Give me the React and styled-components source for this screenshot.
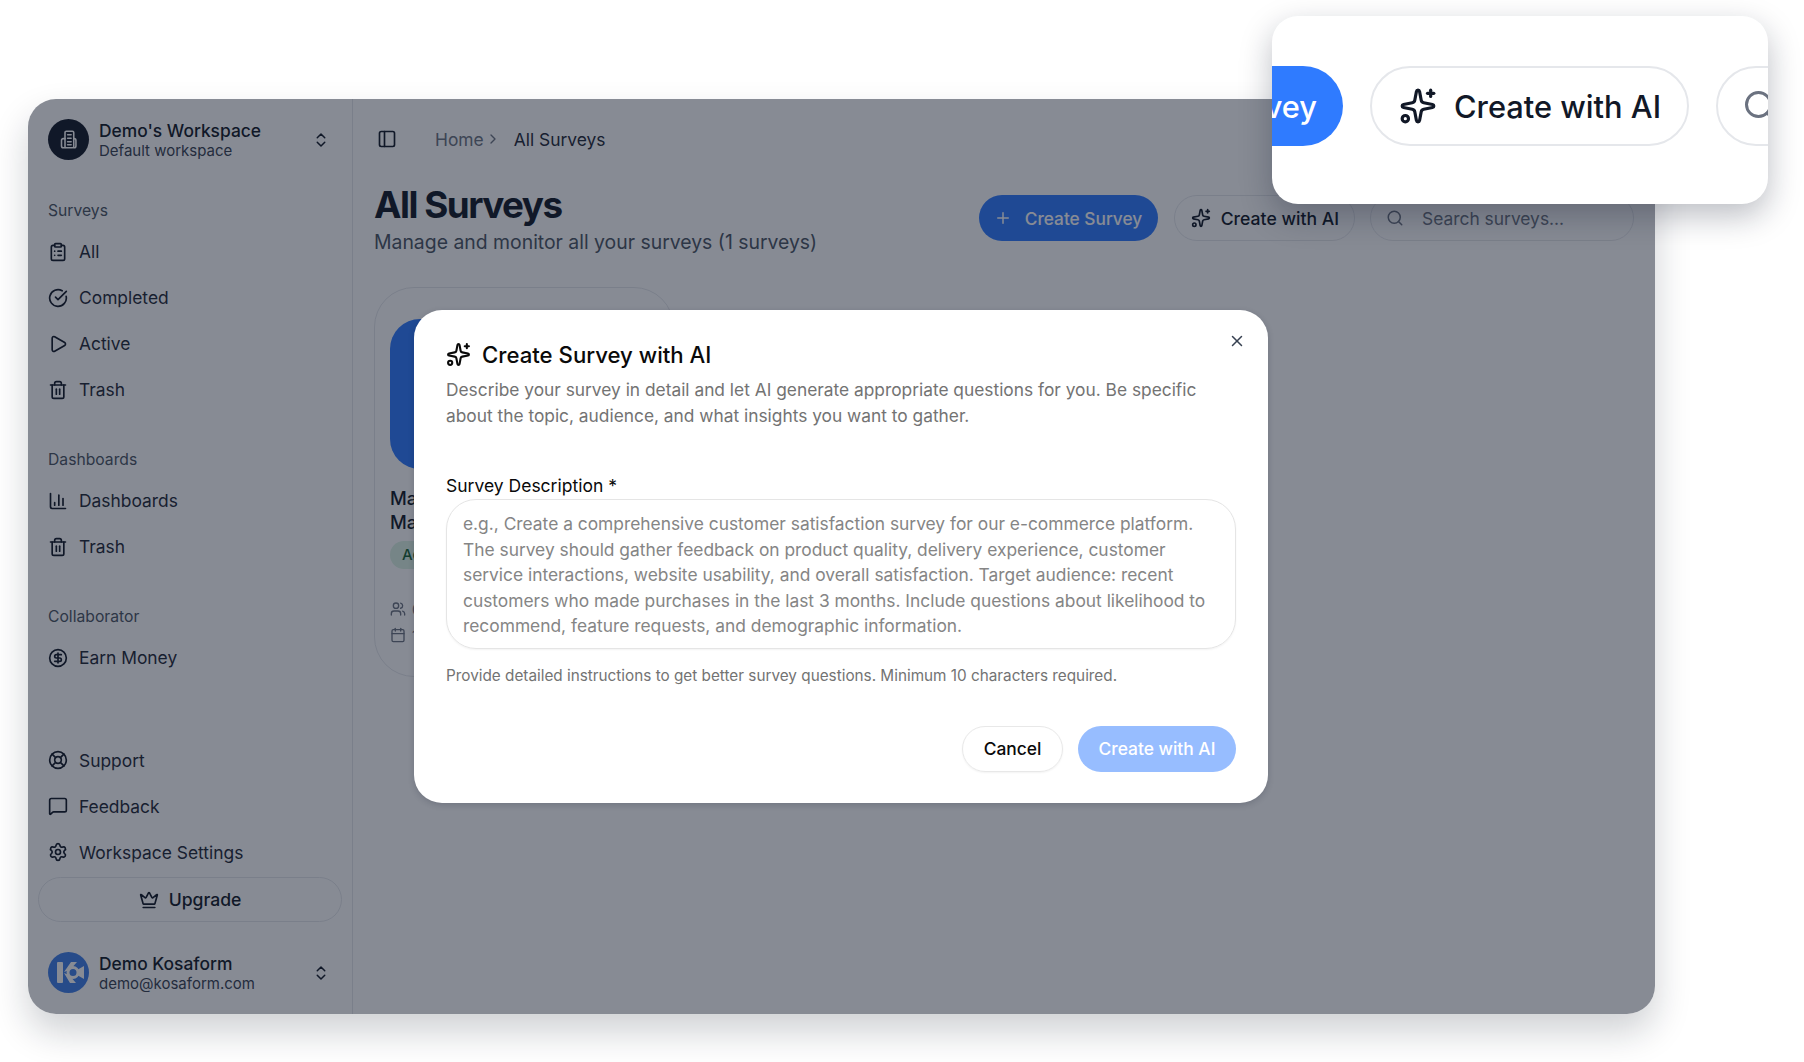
import React from 'react'
import styled, { createGlobalStyle } from 'styled-components'
import {
  Calendar, ChartColumn, ChevronRight, ChevronsUpDown, CircleCheckBig, CircleDollarSign,
  ClipboardList, Crown, LifeBuoy, MessageSquare, PanelLeft, Play, Plus, Search, Settings, Sparkles,
  Trash2, Users, X,
} from 'lucide-react'

const GlobalStyle = createGlobalStyle`
  html, body { margin: 0; padding: 0; background: #fff; }
  body { font-family: Inter, "Noto Sans", sans-serif; color: #111827; overflow: hidden; }
  * { box-sizing: border-box; }
`

const Page = styled.div`
  position: relative;
  width: 1804px;
  height: 1062px;
  padding: 99px 0 0 28px;
`
const AppWindow = styled.div`
  position: relative;
  display: flex;
  width: 1627px;
  height: 915px;
  background: #fff;
  border-radius: 28px;
  overflow: hidden;
`
const WindowShadow = styled.div`
  width: 1627px;
  height: 915px;
  border-radius: 28px;
  box-shadow: 0 18px 36px rgba(15, 23, 42, 0.2);
`
const Sidebar = styled.aside`
  width: 325px;
  flex: none;
  display: flex;
  flex-direction: column;
  padding: 20px 10px 21px;
  border-right: 1.5px solid #e5e7eb;
`
const IdentityRow = styled.div`
  display: flex;
  align-items: center;
  gap: 10px;
  padding: 0 10px;
  height: 41px;
  svg.chev { margin-left: auto; margin-right: 2px; color: #111827; }
`
const WorkspaceMark = styled.div`
  width: 41px;
  height: 41px;
  border-radius: 50%;
  background: #111827;
  color: #fff;
  display: flex;
  align-items: center;
  justify-content: center;
  flex: none;
`
const IdentityText = styled.div`
  display: flex;
  flex-direction: column;
  padding-top: 2px;
  strong { font-size: 17.4px; line-height: 21px; font-weight: 500; color: #111827; }
  small { font-size: 15px; line-height: 20px; font-weight: 400; color: #374151; }
`
const Section = styled.div`
  display: flex;
  flex-direction: column;
  margin-top: ${(p) => p.$top}px;
`
const SectionLabel = styled.div`
  padding: 0 10px;
  height: 20px;
  line-height: 20px;
  font-size: 15.7px;
  color: #4b5563;
  margin-bottom: 7.5px;
`
const NavItem = styled.div`
  display: flex;
  align-items: center;
  gap: 11px;
  height: 46px;
  padding: 0 10px;
  font-size: 17.4px;
  color: #1f2937;
  svg { flex: none; color: #111827; }
`
const Spacer = styled.div`
  flex: 1;
`
const UpgradeButton = styled.div`
  display: flex;
  align-items: center;
  justify-content: center;
  gap: 10px;
  height: 45px;
  margin-top: 2px;
  border: 1.5px solid #e5e7eb;
  border-radius: 23px;
  font-size: 17.6px;
  font-weight: 500;
  color: #111827;
`
const UserRow = styled(IdentityRow)`
  margin-top: 30px;
`
const Main = styled.main`
  flex: 1;
  min-width: 0;
  padding: 21px 21px 0 21px;
`
const TopBar = styled.div`
  display: flex;
  align-items: center;
  height: 22px;
  margin-top: 8px;
  font-size: 17.4px;
  color: #6b7280;
  svg.toggle { margin-left: 3px; margin-right: 38px; color: #111827; }
  svg.sep { margin: 0 13px 0 1px; }
  b { font-weight: 400; color: #1f2937; }
`
const HeadRow = styled.div`
  display: flex;
  align-items: flex-start;
  justify-content: space-between;
  margin-top: 31px;
`
const PageTitle = styled.h1`
  margin: 0;
  font-size: 36.8px;
  line-height: 47px;
  font-weight: 700;
  letter-spacing: -1.5px;
  color: #111827;
`
const PageSub = styled.p`
  margin: 1px 0 0;
  font-size: 19.4px;
  line-height: 26px;
  color: #4b5563;
`
const Actions = styled.div`
  display: flex;
  gap: 15px;
  margin-top: 14px;
`
const PrimaryButton = styled.div`
  display: flex;
  align-items: center;
  gap: 13px;
  width: 179px;
  height: 46px;
  margin-right: 1px;
  padding: 0 15px;
  border-radius: 23px;
  background: #2f7bff;
  color: #fff;
  font-size: 17.3px;
  font-weight: 500;
`
const OutlineButton = styled.div`
  display: flex;
  align-items: center;
  gap: 10px;
  height: 46px;
  padding: 0 15px 0 16px;
  border-radius: 23px;
  border: 1.5px solid #e5e7eb;
  background: #fff;
  color: #111827;
  font-size: 17.6px;
  font-weight: 500;
`
const SearchBox = styled.div`
  display: flex;
  align-items: center;
  gap: 18px;
  width: 264px;
  height: 46px;
  padding: 0 15px;
  border-radius: 23px;
  border: 1.5px solid #e5e7eb;
  color: #6b7280;
  font-size: 17.4px;
`
const SurveyCard = styled.div`
  width: 300px;
  height: 390px;
  margin-top: 32px;
  padding: 31px 15px 0;
  border: 1.5px solid #e5e7eb;
  border-radius: 40px;
`
const CardCover = styled.div`
  height: 150px;
  border-radius: 30px;
  background: #2f7bff;
`
const CardTitle = styled.div`
  margin-top: 17px;
  font-size: 18.4px;
  line-height: 24px;
  font-weight: 500;
  color: #111827;
`
const StatusBadge = styled.div`
  display: inline-block;
  margin-top: 7px;
  height: 28px;
  padding: 0 12px;
  border-radius: 14px;
  background: #dcf3e4;
  color: #166534;
  font-size: 15px;
  font-weight: 500;
  line-height: 28px;
`
const MetaList = styled.div`
  margin-top: 27px;
`
const MetaRow = styled.div`
  display: flex;
  align-items: center;
  gap: 6px;
  height: 26px;
  font-size: 14.5px;
  color: #6b7280;
`
const Scrim = styled.div`
  position: absolute;
  inset: 0;
  background: rgba(15, 23, 42, 0.5);
`
const Modal = styled.div`
  position: absolute;
  left: 386px;
  top: 211px;
  width: 854px;
  height: 493px;
  padding: 30px 32px;
  background: #fff;
  border-radius: 28px;
  box-shadow: 0 2px 6px rgba(15, 23, 42, 0.18);
`
const CloseIcon = styled(X)`
  position: absolute;
  top: 22px;
  right: 22px;
  color: #374151;
`
const ModalTitle = styled.h2`
  display: flex;
  align-items: center;
  gap: 11px;
  margin: 0;
  height: 28px;
  font-size: 22.2px;
  font-weight: 500;
  color: #0a0a0a;
`
const ModalDesc = styled.p`
  margin: 9px 0 0;
  font-size: 17.34px;
  line-height: 25.5px;
  color: #737373;
`
const FieldLabel = styled.label`
  display: block;
  margin-top: 46px;
  font-size: 17.5px;
  line-height: 24px;
  font-weight: 400;
  color: #0a0a0a;
`
const PromptBox = styled.div`
  margin-top: 1px;
  width: 790px;
  height: 150px;
  padding: 11px 16px;
  border: 1.5px solid #e5e5e5;
  border-radius: 30px;
  font-size: 17.36px;
  line-height: 25.5px;
  color: #858585;
  box-shadow: 0 1px 2px rgba(0, 0, 0, 0.05);
`
const Hint = styled.p`
  margin: 17px 0 0;
  font-size: 15.3px;
  line-height: 20px;
  color: #737373;
`
const ModalActions = styled.div`
  display: flex;
  justify-content: flex-end;
  gap: 15px;
  margin-top: 39.5px;
  width: 790px;
`
const CancelButton = styled.div`
  display: flex;
  align-items: center;
  justify-content: center;
  width: 101px;
  height: 46px;
  border: 1.5px solid #e8e8e8;
  border-radius: 23px;
  font-size: 17.4px;
  font-weight: 500;
  color: #0a0a0a;
  box-shadow: 0 1px 2px rgba(0, 0, 0, 0.05);
`
const SubmitButton = styled.div`
  display: flex;
  align-items: center;
  justify-content: center;
  width: 158px;
  height: 46px;
  border-radius: 23px;
  background: #97bdff;
  font-size: 17.4px;
  font-weight: 500;
  color: #fff;
`
const Callout = styled.div`
  position: absolute;
  left: 1272px;
  top: 16px;
  width: 496px;
  height: 188px;
  display: flex;
  align-items: center;
  gap: 27px;
  overflow: hidden;
  background: #fff;
  border-radius: 26px;
  box-shadow: 0 12px 32px rgba(15, 23, 42, 0.28);
`
const CalloutPrimary = styled.div`
  flex: none;
  display: flex;
  align-items: center;
  justify-content: flex-end;
  width: 71px;
  height: 80px;
  margin-top: -8px;
  padding-right: 26px;
  border-radius: 0 40px 40px 0;
  background: #2f7bff;
  color: #fff;
  font-size: 30.8px;
  font-weight: 500;
  white-space: nowrap;
  overflow: hidden;
`
const CalloutOutline = styled.div`
  flex: none;
  display: flex;
  align-items: center;
  gap: 17px;
  width: 319px;
  height: 80px;
  margin-top: -8px;
  padding: 0 27px;
  border: 2.5px solid #e5e7eb;
  border-radius: 40px;
  font-size: 30.8px;
  font-weight: 500;
  white-space: nowrap;
  color: #111827;
  svg { flex: none; }
`
const CalloutSearch = styled.div`
  flex: none;
  display: flex;
  align-items: center;
  width: 120px;
  height: 80px;
  margin-top: -8px;
  padding-left: 24px;
  border: 2.5px solid #e5e7eb;
  border-radius: 40px;
  color: #6b7280;
`

const surveyNav = [
  [ClipboardList, 'All'],
  [CircleCheckBig, 'Completed'],
  [Play, 'Active'],
  [Trash2, 'Trash'],
]
const dashNav = [
  [ChartColumn, 'Dashboards'],
  [Trash2, 'Trash'],
]
const footNav = [
  [LifeBuoy, 'Support'],
  [MessageSquare, 'Feedback'],
  [Settings, 'Workspace Settings'],
]

function NavList({ items }) {
  return items.map(([Icon, label]) => (
    <NavItem key={label}>
      <Icon size={20} strokeWidth={2} />
      {label}
    </NavItem>
  ))
}

function BuildingGlyph() {
  return (
    <svg width="21" height="21" viewBox="0 0 24 24" fill="none" stroke="currentColor" strokeWidth="1.8" strokeLinecap="round" strokeLinejoin="round">
      <rect x="8" y="2.5" width="10" height="19" rx="1.5" />
      <path d="M8 11H6a2 2 0 0 0-2 2v6.5a2 2 0 0 0 2 2h2" />
      <path d="M18 11h0.5a2 2 0 0 1 2 2v6.5a2 2 0 0 1-2 2H18" />
      <path d="M11 6.5h4M11 10.5h4M11 14.5h4M11 18h4" />
    </svg>
  )
}

function KosaformMark() {
  return (
    <svg width="41" height="41" viewBox="0 0 41 41" style={{ flex: 'none' }}>
      <circle cx="20.5" cy="20.5" r="20.5" fill="#3f7fe8" />
      <rect x="9" y="10" width="6" height="21" rx="1" fill="#fff" />
      <path d="M16 20 L23 10 H29 L22 18 Z M16 21 L22 31 H28 L21 23 Z" fill="#fff" />
      <circle cx="25" cy="20.5" r="5" fill="#3f7fe8" stroke="#fff" strokeWidth="3" />
      <path d="M29 18 L36 14 V27 L29 23 Z" fill="#fff" />
    </svg>
  )
}

export default function App() {
  return (
    <Page>
      <GlobalStyle />
      <WindowShadow>
        <AppWindow>
          <Sidebar>
            <IdentityRow>
              <WorkspaceMark><BuildingGlyph /></WorkspaceMark>
              <IdentityText>
                <strong>Demo's Workspace</strong>
                <small>Default workspace</small>
              </IdentityText>
              <ChevronsUpDown className="chev" size={18} />
            </IdentityRow>
            <Section $top={41}>
              <SectionLabel>Surveys</SectionLabel>
              <NavList items={surveyNav} />
            </Section>
            <Section $top={37.5}>
              <SectionLabel>Dashboards</SectionLabel>
              <NavList items={dashNav} />
            </Section>
            <Section $top={37.5}>
              <SectionLabel>Collaborator</SectionLabel>
              <NavList items={[[CircleDollarSign, 'Earn Money']]} />
            </Section>
            <Spacer />
            <NavList items={footNav} />
            <UpgradeButton><Crown size={20} />Upgrade</UpgradeButton>
            <UserRow>
              <KosaformMark />
              <IdentityText>
                <strong>Demo Kosaform</strong>
                <small>demo@kosaform.com</small>
              </IdentityText>
              <ChevronsUpDown className="chev" size={18} />
            </UserRow>
          </Sidebar>
          <Main>
            <TopBar>
              <PanelLeft className="toggle" size={20} />
              Home
              <ChevronRight className="sep" size={16} />
              <b>All Surveys</b>
            </TopBar>
            <HeadRow>
              <div>
                <PageTitle>All Surveys</PageTitle>
                <PageSub>Manage and monitor all your surveys (1 surveys)</PageSub>
              </div>
              <Actions>
                <PrimaryButton><Plus size={18} />Create Survey</PrimaryButton>
                <OutlineButton><Sparkles size={20} />Create with AI</OutlineButton>
                <SearchBox><Search size={18} />Search surveys...</SearchBox>
              </Actions>
            </HeadRow>
            <SurveyCard>
              <CardCover />
              <CardTitle>Market<br />Market</CardTitle>
              <StatusBadge>Active</StatusBadge>
              <MetaList>
                <MetaRow><Users size={16} />0</MetaRow>
                <MetaRow><Calendar size={16} />1</MetaRow>
              </MetaList>
            </SurveyCard>
          </Main>
          <Scrim />
          <Modal>
            <CloseIcon size={18} />
            <ModalTitle><Sparkles size={25} />Create Survey with AI</ModalTitle>
            <ModalDesc>
              Describe your survey in detail and let AI generate appropriate questions for you. Be specific<br />
              about the topic, audience, and what insights you want to gather.
            </ModalDesc>
            <FieldLabel>Survey Description *</FieldLabel>
            <PromptBox>
              e.g., Create a comprehensive customer satisfaction survey for our e-commerce platform.<br />
              The survey should gather feedback on product quality, delivery experience, customer<br />
              service interactions, website usability, and overall satisfaction. Target audience: recent<br />
              customers who made purchases in the last 3 months. Include questions about likelihood to<br />
              recommend, feature requests, and demographic information.
            </PromptBox>
            <Hint>Provide detailed instructions to get better survey questions. Minimum 10 characters required.</Hint>
            <ModalActions>
              <CancelButton>Cancel</CancelButton>
              <SubmitButton>Create with AI</SubmitButton>
            </ModalActions>
          </Modal>
        </AppWindow>
      </WindowShadow>
      <Callout>
        <CalloutPrimary>vey</CalloutPrimary>
        <CalloutOutline><Sparkles size={38} />Create with AI</CalloutOutline>
        <CalloutSearch><Search size={36} /></CalloutSearch>
      </Callout>
    </Page>
  )
}
